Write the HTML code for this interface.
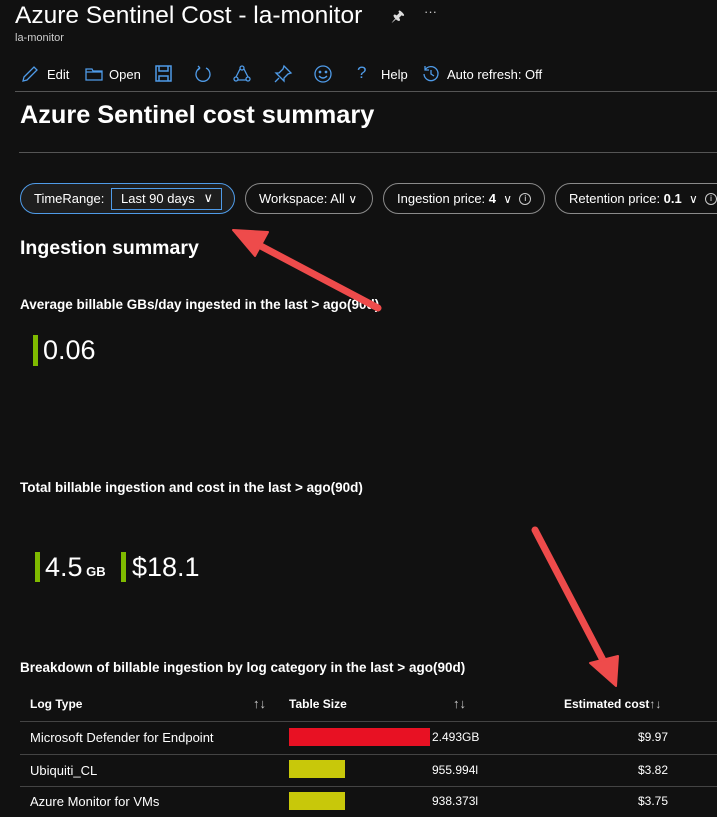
<!DOCTYPE html>
<html><head><meta charset="utf-8"><style>
*{box-sizing:border-box;margin:0;padding:0}
body{width:717px;height:817px;overflow:hidden;background:#111111;color:#fff;font-family:"Liberation Sans",sans-serif;position:relative}
.a{position:absolute;white-space:nowrap}
.pill{position:absolute;top:183px;height:31px;border:1px solid #8a8a8a;border-radius:16px;font-size:13px;display:flex;align-items:center;padding-left:13px}
.hr{position:absolute;height:1px;background:#555}
.tb{font-size:13px;top:67px}
.ic{position:absolute;top:64px}
.gb{position:absolute;width:5px;background:#7fba00}
.row{position:absolute;left:20px;width:697px;height:1px;background:#444}
.td{position:absolute;font-size:13px}
.sub{font-size:13.5px;font-weight:bold}
</style></head><body>
<div class="a" style="left:15px;top:2px;font-size:24.5px">Azure Sentinel Cost - la-monitor</div>
<div class="a" style="left:391px;top:6px;font-size:15px;color:#ddd">&#x1F588;</div>
<div class="a" style="left:424px;top:4px;font-size:13px;color:#ccc">···</div>
<div class="a" style="left:15px;top:32px;font-size:11px;color:#ccc">la-monitor</div>

<svg class="ic" style="left:20px" width="20" height="20" viewBox="0 0 20 20" fill="none" stroke="#4f9be8" stroke-width="1.3"><path d="M3 17l1-4L14 3l3 3L7 16z"/></svg>
<div class="a tb" style="left:47px">Edit</div>
<svg class="ic" style="left:84px" width="20" height="20" viewBox="0 0 20 20" fill="none" stroke="#4f9be8" stroke-width="1.3"><path d="M2 5h6l1 2h9v9H2z M2 8h16"/></svg>
<div class="a tb" style="left:109px">Open</div>
<svg class="ic" style="left:154px" width="20" height="20" viewBox="0 0 20 20" fill="none" stroke="#4f9be8" stroke-width="1.5"><rect x="2" y="2" width="15" height="15"/><path d="M5 2v5h9V2M5 17v-5h9v5"/></svg>
<svg class="ic" style="left:193px" width="20" height="20" viewBox="0 0 20 20" fill="none" stroke="#4f9be8" stroke-width="1.3"><path d="M7 4A7 7 0 1 0 13 4M7 4L5 2M7 4L5 6"/></svg>
<svg class="ic" style="left:232px" width="20" height="20" viewBox="0 0 20 20" fill="none" stroke="#4f9be8" stroke-width="1.3"><circle cx="10" cy="4" r="2"/><circle cx="4" cy="15" r="2"/><circle cx="16" cy="15" r="2"/><path d="M8 5L4 13M12 5l4 8M6 16h8"/></svg>
<svg class="ic" style="left:273px" width="20" height="20" viewBox="0 0 20 20" fill="none" stroke="#4f9be8" stroke-width="1.3"><path d="M11 2l7 7-3 1-4 4 0 3-8-8 3 0 4-4z M6 14l-4 4"/></svg>
<svg class="ic" style="left:313px" width="20" height="20" viewBox="0 0 20 20" fill="none" stroke="#4f9be8" stroke-width="1.3"><circle cx="10" cy="10" r="8"/><circle cx="7" cy="8" r=".7"/><circle cx="13" cy="8" r=".7"/><path d="M6 12q4 4 8 0"/></svg>
<div class="a tb" style="left:357px;color:#4f9be8;font-size:17px;top:63px">?</div>
<div class="a tb" style="left:381px">Help</div>
<svg class="ic" style="left:421px" width="20" height="20" viewBox="0 0 20 20" fill="none" stroke="#4f9be8" stroke-width="1.3"><path d="M4 6A7 7 0 1 1 3 10M4 2v4h4M10 6v4l3 2"/></svg>
<div class="a tb" style="left:447px">Auto refresh: Off</div>
<div class="hr" style="left:15px;top:91px;width:702px"></div>

<div class="a" style="left:20px;top:101px;font-size:25.3px;font-weight:bold">Azure Sentinel cost summary</div>
<div class="hr" style="left:19px;top:152px;width:698px"></div>

<div class="pill" style="left:20px;width:215px;border-color:#4f9be8;background:#1e1e1e">TimeRange:
  <div style="position:absolute;left:90px;top:4px;width:111px;height:22px;border:1px solid #4f9be8;padding-left:9px;line-height:20px">Last 90 days <span style="position:absolute;right:8px;top:-1px">&#x2228;</span></div></div>
<div class="pill" style="left:245px;width:128px">Workspace: All&nbsp;<span style="font-size:12px">&#x2228;</span></div>
<div class="pill" style="left:383px;width:162px">Ingestion price: <b>&nbsp;4</b>&nbsp;&nbsp;<span style="font-size:12px">&#x2228;</span>&nbsp;&nbsp;<span style="display:inline-block;width:12px;height:12px;border:1px solid #ccc;border-radius:50%;font-size:8px;text-align:center;line-height:10px">i</span></div>
<div class="pill" style="left:555px;width:200px">Retention price: <b>&nbsp;0.1</b>&nbsp;&nbsp;<span style="font-size:12px">&#x2228;</span>&nbsp;&nbsp;<span style="display:inline-block;width:12px;height:12px;border:1px solid #ccc;border-radius:50%;font-size:8px;text-align:center;line-height:10px">i</span></div>

<div class="a" style="left:20px;top:237px;font-size:19.5px;font-weight:bold">Ingestion summary</div>
<div class="a sub" style="left:20px;top:297px">Average billable GBs/day ingested in the last &gt; ago(90d)</div>
<div class="gb" style="left:33px;top:335px;height:31px"></div>
<div class="a" style="left:43px;top:335px;font-size:27px">0.06</div>

<div class="a sub" style="left:20px;top:480px">Total billable ingestion and cost in the last &gt; ago(90d)</div>
<div class="gb" style="left:35px;top:552px;height:30px"></div>
<div class="a" style="left:45px;top:552px;font-size:27px">4.5<span style="font-size:13px;font-weight:bold"> GB</span></div>
<div class="gb" style="left:121px;top:552px;height:30px"></div>
<div class="a" style="left:132px;top:552px;font-size:27px">$18.1</div>

<div class="a sub" style="left:20px;top:660px">Breakdown of billable ingestion by log category in the last &gt; ago(90d)</div>
<div class="td" style="left:30px;top:697px;font-weight:bold;font-size:12px">Log Type</div>
<div class="td" style="left:253px;top:696px;color:#ccc">↑↓</div>
<div class="td" style="left:289px;top:697px;font-weight:bold;font-size:12px">Table Size</div>
<div class="td" style="left:453px;top:696px;color:#ccc">↑↓</div>
<div class="td" style="left:564px;top:697px;font-weight:bold;font-size:12px">Estimated cost<span style="font-weight:normal;color:#ccc">↑↓</span></div>
<div class="row" style="top:721px"></div>
<div class="td" style="left:30px;top:730px">Microsoft Defender for Endpoint</div>
<div style="position:absolute;left:289px;top:728px;width:141px;height:18px;background:#e81123"></div>
<div class="td" style="left:432px;top:730px;font-size:12px">2.493GB</div>
<div class="td" style="left:638px;top:730px;font-size:12px">$9.97</div>
<div class="row" style="top:754px"></div>
<div class="td" style="left:30px;top:763px">Ubiquiti_CL</div>
<div style="position:absolute;left:289px;top:760px;width:56px;height:18px;background:#c8c80a"></div>
<div class="td" style="left:432px;top:763px;font-size:12px">955.994l</div>
<div class="td" style="left:638px;top:763px;font-size:12px">$3.82</div>
<div class="row" style="top:786px"></div>
<div class="td" style="left:30px;top:794px">Azure Monitor for VMs</div>
<div style="position:absolute;left:289px;top:792px;width:56px;height:18px;background:#c8c80a"></div>
<div class="td" style="left:432px;top:794px;font-size:12px">938.373l</div>
<div class="td" style="left:638px;top:794px;font-size:12px">$3.75</div>

<svg style="position:absolute;left:0;top:0" width="717" height="817">
<g fill="#ee4b4b" stroke="#ee4b4b" stroke-linecap="round">
<line x1="378" y1="308" x2="255" y2="243" stroke-width="7"/>
<polygon points="233,230 268,232 255,256" stroke-width="2" stroke-linejoin="round"/>
<line x1="535" y1="530" x2="605" y2="664" stroke-width="7"/>
<polygon points="616,686 590,663 618,656" stroke-width="2" stroke-linejoin="round"/>
</g>
</svg>
</body></html>
